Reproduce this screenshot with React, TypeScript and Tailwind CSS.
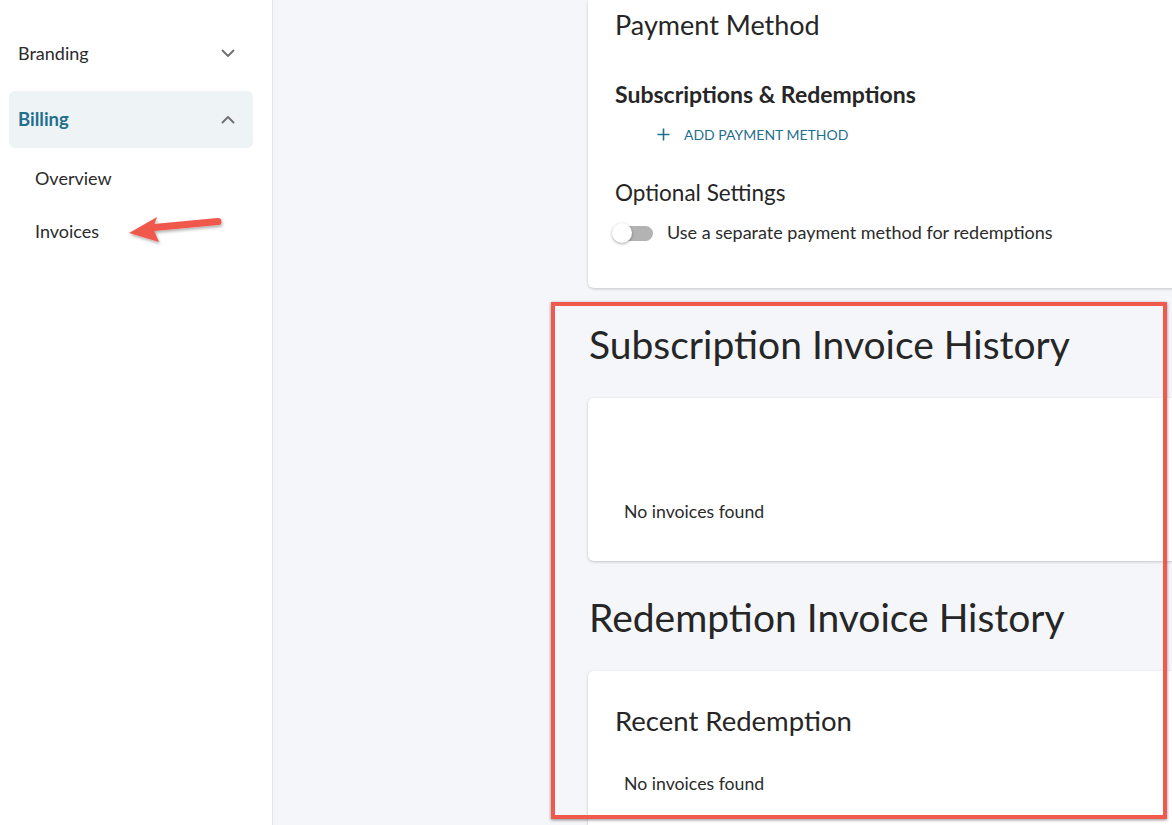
import React from 'react';

const font = { fontFamily: 'Lato, "Open Sans", sans-serif' };

const Chevron = ({ up }: { up?: boolean }) => (
  <svg className="w-[14px] h-[9px]" viewBox="0 0 14 9" fill="none" stroke="#6e6e6e" strokeWidth="1.8" strokeLinecap="round" strokeLinejoin="round">
    {up ? <path d="M1.5 7.5L7 2l5.5 5.5" /> : <path d="M1.5 1.5L7 7l5.5-5.5" />}
  </svg>
);

const Sidebar = () => (
  <aside className="w-[273px] shrink-0 bg-white border-r border-[#e3e5ea] min-h-[825px] pt-[33px] relative">
    <div className="flex items-center justify-between h-[40px] pl-[18px] pr-[37px] text-[18px] text-[#2b2b2b]">
      <span>Branding</span>
      <Chevron />
    </div>
    <div className="ml-[9px] mr-[19px] mt-[18px] h-[57px] rounded-md bg-[#eef3f6] flex items-center justify-between pl-[9px] pr-[18px]">
      <span className="text-[18.5px] font-bold text-[#1f6f8f]">Billing</span>
      <Chevron up />
    </div>
    <div className="pl-[35px] text-[18px] text-[#2b2b2b]">
      <div className="h-[53px] flex items-center mt-[4px]">Overview</div>
      <div className="h-[53px] flex items-center">Invoices</div>
    </div>
    {/* annotation arrow */}
    <svg className="absolute left-[124px] top-[212px] w-[104px] h-[40px]" viewBox="0 0 104 40">
      <defs>
        <filter id="sh" x="-20%" y="-40%" width="140%" height="180%">
          <feDropShadow dx="1" dy="2" stdDeviation="1.5" floodColor="#000" floodOpacity="0.3" />
        </filter>
      </defs>
      <g filter="url(#sh)">
        <path d="M94 9.5 L30 15.5" stroke="#f0584c" strokeWidth="7" strokeLinecap="round" />
        <path d="M5 21 L33 5 L29 16 L35 30 Z" fill="#f0584c" />
      </g>
    </svg>
  </aside>
);

const Toggle = () => (
  <div className="relative w-[42px] h-[22px] shrink-0">
    <div className="absolute left-[8px] top-[4px] w-[33px] h-[15px] rounded-full bg-[#b3b3b3]" />
    <div className="absolute left-0 top-[1px] w-[20px] h-[20px] rounded-full bg-white shadow-[0_1px_3px_rgba(0,0,0,0.35)]" />
  </div>
);

const App: React.FC = () => {
  return (
    <div className="w-[1172px] h-[825px] overflow-hidden flex bg-[#f5f6fa] text-[#222]" style={font}>
      <Sidebar />
      <main className="flex-1 relative">
        <div className="ml-[315px] w-[640px]">
          {/* payment method card */}
          <div className="bg-white rounded-b-md shadow-[0_1px_3px_rgba(0,0,0,0.2)] px-[27px] pt-[7px] h-[288px]">
            <h2 className="text-[27px] leading-[36px] text-[#262626]">Payment Method</h2>
            <h3 className="mt-[37px] text-[23px] font-bold leading-[28px] text-[#262626]">Subscriptions &amp; Redemptions</h3>
            <button className="mt-[16px] ml-[42px] flex items-center gap-[14px] text-[#1f6f8f] text-[14px]">
              <svg className="w-[13px] h-[13px]" viewBox="0 0 13 13" stroke="#1f6f8f" strokeWidth="1.6"><path d="M6.5 0.5v12M0.5 6.5h12" /></svg>
              <span>ADD PAYMENT METHOD</span>
            </button>
            <h3 className="mt-[33px] text-[22.5px] leading-[30px] text-[#262626]">Optional Settings</h3>
            <div className="mt-[11px] -ml-[3px] flex items-center gap-[13px]">
              <Toggle />
              <span className="text-[18px] text-[#2b2b2b]">Use a separate payment method for redemptions</span>
            </div>
          </div>

          <h1 className="mt-[30px] ml-[1px] text-[39px] leading-[52px] text-[#262626]">Subscription Invoice History</h1>
          <div className="mt-[28px] bg-white rounded-md shadow-[0_1px_3px_rgba(0,0,0,0.2)] h-[163px] px-[36px] flex items-end pb-[35px]">
            <span className="text-[17.7px] text-[#2b2b2b]">No invoices found</span>
          </div>

          <h1 className="mt-[30px] ml-[1px] text-[39px] leading-[52px] text-[#262626]">Redemption Invoice History</h1>
          <div className="mt-[28px] bg-white rounded-t-md shadow-[0_1px_3px_rgba(0,0,0,0.2)] h-[200px] px-[27px] pt-[33px]">
            <h3 className="text-[27.5px] leading-[34px] text-[#262626]">Recent Redemption</h3>
            <p className="mt-[33px] ml-[9px] text-[17.7px] text-[#2b2b2b]">No invoices found</p>
          </div>
        </div>
        {/* annotation rectangle */}
        <div className="absolute left-[278px] top-[302px] w-[616px] h-[517px] border-[4px] border-[#ef5a4c] shadow-[0_1px_3px_rgba(0,0,0,0.45)] pointer-events-none" />
      </main>
    </div>
  );
};

export default App;
